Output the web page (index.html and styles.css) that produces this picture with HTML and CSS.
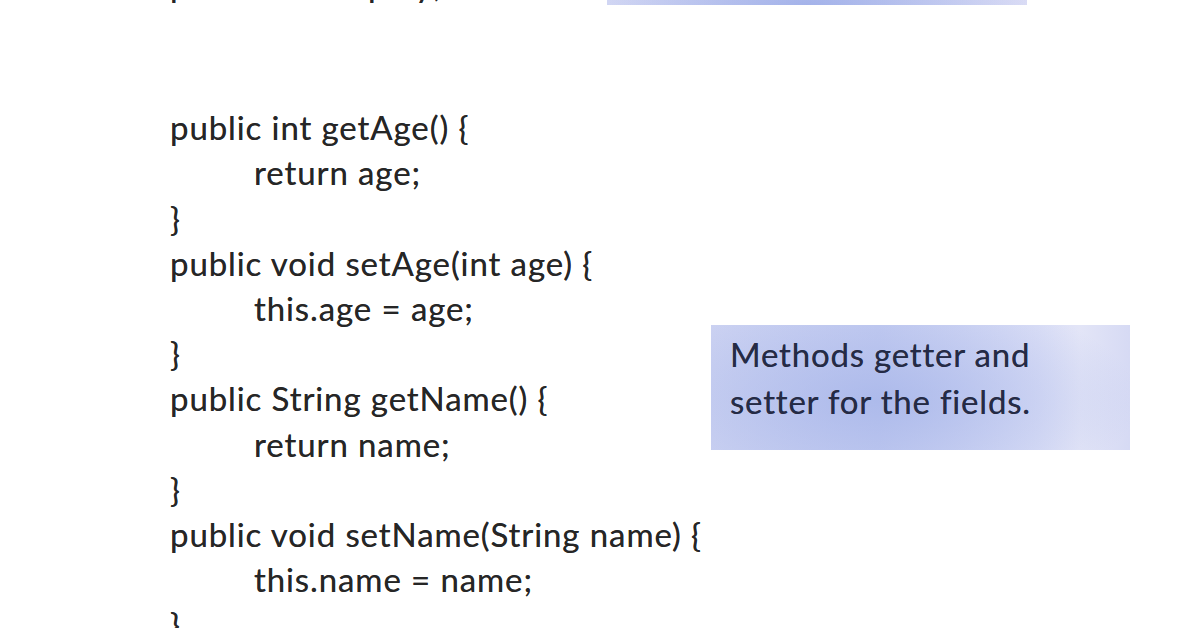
FILE: index.html
```html
<!DOCTYPE html>
<html lang="en">
<head>
<meta charset="utf-8">
<title>Getters and setters</title>
<link rel="stylesheet" href="styles.css">
</head>
<body>
<div class="slide">
  <div class="code">
    <div class="line">public int employ;</div>
    <div class="gap"></div>
    <div class="line">public int getAge() {</div>
    <div class="line indent">return age;</div>
    <div class="line">}</div>
    <div class="line">public void setAge(int age) {</div>
    <div class="line indent">this.age = age;</div>
    <div class="line">}</div>
    <div class="line">public String getName() {</div>
    <div class="line indent">return name;</div>
    <div class="line">}</div>
    <div class="line">public void setName(String name) {</div>
    <div class="line indent">this.name = name;</div>
    <div class="line">}</div>
  </div>
  <div class="notes">
    <div class="note note-top"></div>
    <div class="note note-methods">Methods getter and setter for the fields.</div>
  </div>
</div>
</body>
</html>
```
FILE: styles.css
```css
html, body {
  margin: 0;
  padding: 0;
  background: #ffffff;
}
body {
  width: 1196px;
  height: 628px;
  overflow: hidden;
}
.slide {
  display: flex;
  margin-top: -120px;
  font-family: Lato, "Open Sans", sans-serif;
}
.code {
  width: 437px;
  padding-left: 170px;
  padding-top: 82px;
  color: #262626;
  font-size: 33px;
  letter-spacing: 0.9px;
  text-shadow: 0 0 0.6px rgba(30, 30, 30, 0.7);
  flex-shrink: 0;
}
.line {
  height: 45.2px;
  line-height: 45.2px;
  white-space: pre;
}
.indent {
  padding-left: 84px;
}
.gap {
  height: 98px;
}
.notes {
  display: flex;
  flex-direction: column;
  align-items: flex-start;
}
.note {
  box-sizing: border-box;
}
.note-top {
  width: 420px;
  height: 125px;
  background:
    radial-gradient(ellipse 220px 50px at 48% 100%, rgba(155, 172, 232, 0.8), rgba(155, 172, 232, 0) 100%),
    linear-gradient(90deg, #d5d9f4 0%, #c6cdf1 50%, #dadcf5 100%);
}
.note-methods {
  margin-top: 320px;
  margin-left: 104px;
  width: 419px;
  height: 125px;
  padding: 6px 80px 0 19px;
  color: #252b45;
  font-size: 33px;
  line-height: 47px;
  letter-spacing: 0.8px;
  text-shadow: 0 0 0.6px rgba(30, 35, 60, 0.7);
  background:
    radial-gradient(ellipse 260px 110px at 40% 60%, rgba(165, 180, 233, 0.75), rgba(165, 180, 233, 0) 100%),
    linear-gradient(90deg, #cdd3f2 0%, #c5cdf1 40%, #dadef6 78%, #e3e5f7 88%, #d6daf4 100%);
}
```
